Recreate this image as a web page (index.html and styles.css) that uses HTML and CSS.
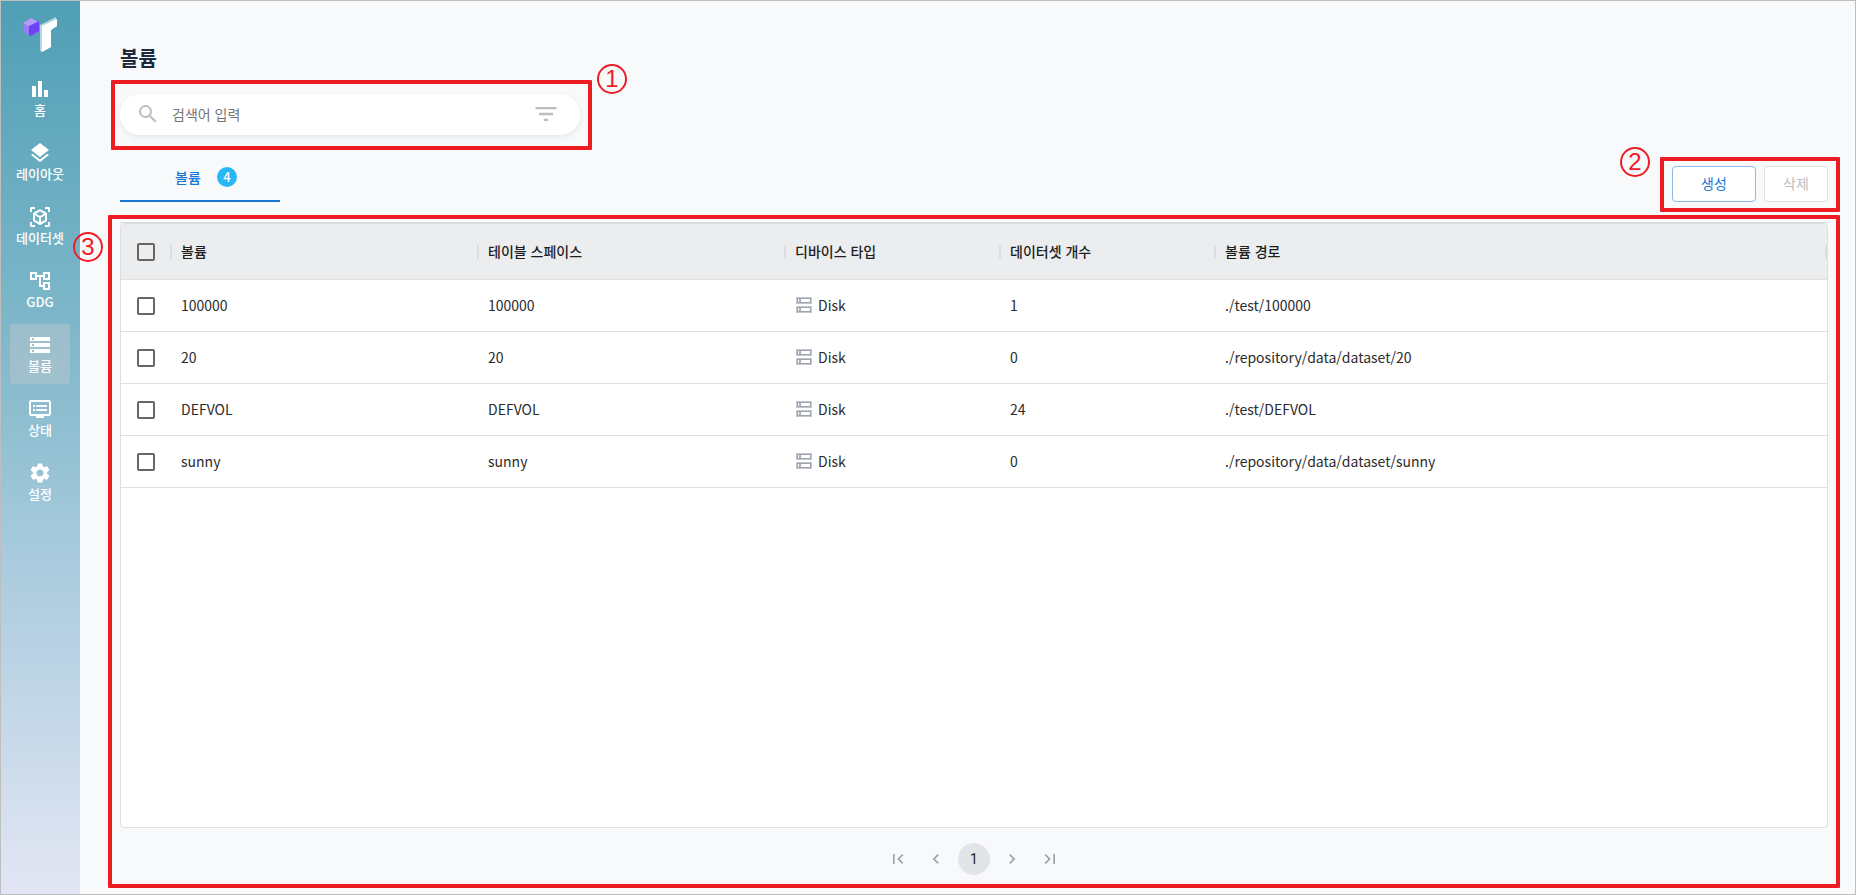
FILE: index.html
```html
<!DOCTYPE html>
<html lang="ko">
<head>
<meta charset="utf-8">
<title>볼륨</title>
<link rel="stylesheet" href="styles.css">
</head>
<body>
<svg class="sprite" aria-hidden="true">
  <symbol id="disk" viewBox="0 0 16 16">
    <path d="M0 0h16v7H0zM0 9h16v7H0z" fill="#c3c7cf"/>
    <path d="M1 1h14v5H1zM1 10h14v5H1z" fill="#9da3ae"/>
    <path d="M2 2h12v3H2zM2 11h12v3H2z" fill="#fff"/>
    <path d="M3 2h2v3H3zM3 11h2v3H3z" fill="#a9aeb8"/>
  </symbol>
</svg>
<div class="app">
  <nav class="sidebar">
    <a class="logo" href="#" aria-label="홈으로">
      <svg width="36" height="36" viewBox="0 0 36 36">
        <path d="M1 6l8-5 8 5v9l-8 4-7-4z" fill="#9b7df8"/>
        <path d="M1 6l8-5 7 4-8 5z" fill="#b39bfa"/>
        <path d="M7 9l10-5v10l-8 5-2-1z" fill="#6f42f7"/>
        <path d="M18 8L34 0l1 9-6 4v17l-9 5-2-1z" fill="#b5d8e0"/>
        <path d="M20 9l15-7v7l-6 4v17l-9 5z" fill="#fff"/>
      </svg>
    </a>
    <a class="nav-item" href="#"><svg class="icon" viewBox="0 0 24 24"><path d="M4 9h4v11H4zm12 4h4v7h-4zm-6-9h4v16h-4z"/></svg><span>홈</span></a>
    <a class="nav-item" href="#"><svg class="icon" viewBox="0 0 24 24"><path d="M11.99 18.54l-7.37-5.73L3 14.07l9 7 9-7-1.63-1.27-7.38 5.74zM12 16l7.36-5.73L21 9l-9-7-9 7 1.63 1.27L12 16z"/></svg><span>레이아웃</span></a>
    <a class="nav-item" href="#"><svg class="icon" viewBox="0 0 24 24"><path d="M17,22V20H20V17H22V20.5C22,20.89 21.84,21.24 21.54,21.54C21.24,21.84 20.89,22 20.5,22H17M7,22H3.5C3.11,22 2.76,21.84 2.46,21.54C2.16,21.24 2,20.89 2,20.5V17H4V20H7V22M17,2H20.5C20.89,2 21.24,2.16 21.54,2.46C21.84,2.76 22,3.11 22,3.5V7H20V4H17V2M7,2V4H4V7H2V3.5C2,3.11 2.16,2.76 2.46,2.46C2.76,2.16 3.11,2 3.5,2H7M13,17.25L17,14.95V10.36L13,12.66V17.25M12,10.92L16,8.63L12,6.28L8,8.63L12,10.92M7,14.95L11,17.25V12.66L7,10.36V14.95M18.23,7.59C18.73,7.91 19,8.34 19,8.91V15.23C19,15.8 18.73,16.23 18.23,16.55L12.75,19.73C12.25,20.05 11.75,20.05 11.25,19.73L5.77,16.55C5.27,16.23 5,15.8 5,15.23V8.91C5,8.34 5.27,7.91 5.77,7.59L11.25,4.41C11.5,4.28 11.75,4.22 12,4.22C12.25,4.22 12.5,4.28 12.75,4.41L18.23,7.59Z"/></svg><span>데이터셋</span></a>
    <a class="nav-item" href="#"><svg class="icon" viewBox="0 0 24 24"><path d="M22 11V3h-7v3H9V3H2v8h7V8h2v10h4v3h7v-8h-7v3h-2V8h2v3h7zM7 9H4V5h3v4zm10 6h3v4h-3v-4zm0-10h3v4h-3V5z"/></svg><span>GDG</span></a>
    <a class="nav-item active" href="#" aria-current="page"><svg class="icon" viewBox="0 0 24 24"><path d="M2 20h20v-4H2v4zm2-3h2v2H4v-2zM2 4v4h20V4H2zm4 3H4V5h2v2zm-4 7h20v-4H2v4zm2-3h2v2H4v-2z"/></svg><span>볼륨</span></a>
    <a class="nav-item" href="#"><svg class="icon" viewBox="0 0 24 24"><path d="M21 3H3c-1.1 0-2 .9-2 2v12c0 1.1.9 2 2 2h5v2h8v-2h5c1.1 0 1.99-.9 1.99-2L23 5c0-1.1-.9-2-2-2zm0 14H3V5h18v12zm-2-9H8v2h11V8zm0 4H8v2h11v-2zM7 8H5v2h2V8zm0 4H5v2h2v-2z"/></svg><span>상태</span></a>
    <a class="nav-item" href="#"><svg class="icon" viewBox="0 0 24 24"><path d="M19.14 12.94c.04-.3.06-.61.06-.94 0-.32-.02-.64-.07-.94l2.03-1.58c.18-.14.23-.41.12-.61l-1.92-3.32c-.12-.22-.37-.29-.59-.22l-2.39.96c-.5-.38-1.03-.7-1.62-.94l-.36-2.54c-.04-.24-.24-.41-.48-.41h-3.84c-.24 0-.43.17-.47.41l-.36 2.54c-.59.24-1.13.57-1.62.94l-2.39-.96c-.22-.08-.47 0-.59.22L2.74 8.87c-.12.21-.08.47.12.61l2.03 1.58c-.05.3-.09.63-.09.94s.02.64.07.94l-2.03 1.58c-.18.14-.23.41-.12.61l1.92 3.32c.12.22.37.29.59.22l2.39-.96c.5.38 1.03.7 1.62.94l.36 2.54c.05.24.24.41.48.41h3.84c.24 0 .44-.17.47-.41l.36-2.54c.59-.24 1.13-.56 1.62-.94l2.39.96c.22.08.47 0 .59-.22l1.92-3.32c.12-.22.07-.47-.12-.61l-2.01-1.58zM12 15.6c-1.98 0-3.6-1.62-3.6-3.6s1.62-3.6 3.6-3.6 3.6 1.62 3.6 3.6-1.62 3.6-3.6 3.6z"/></svg><span>설정</span></a>
  </nav>
  <main class="content">
    <h1 class="title">볼륨</h1>
    <div class="search">
      <svg class="icon" viewBox="0 0 24 24"><path d="M15.5 14h-.79l-.28-.27A6.471 6.471 0 0 0 16 9.5 6.5 6.5 0 1 0 9.5 16c1.61 0 3.09-.59 4.23-1.57l.27.28v.79l5 4.99L20.49 19l-4.99-5zm-6 0C7.01 14 5 11.99 5 9.5S7.01 5 9.5 5 14 7.01 14 9.5 11.99 14 9.5 14z"/></svg>
      <input class="search-input" type="text" placeholder="검색어 입력" aria-label="검색어 입력">
      <button class="filter" type="button" aria-label="필터"><svg class="icon-large" viewBox="0 0 24 24"><path d="M10 18h4v-2h-4v2zM3 6v2h18V6H3zm3 7h12v-2H6v2z"/></svg></button>
      <div class="callout callout-search"><span class="callout-number">1</span></div>
    </div>
    <div class="toolbar">
      <button class="tab" type="button" aria-current="true">볼륨<span class="badge">4</span></button>
      <div class="actions">
        <button class="btn btn-primary" type="button">생성</button>
        <button class="btn" type="button" disabled>삭제</button>
        <div class="callout callout-actions"><span class="callout-number">2</span></div>
      </div>
    </div>
    <section class="panel">
      <div class="card">
        <table class="grid">
          <colgroup><col class="col-check"><col class="col-wide"><col class="col-wide"><col class="col-mid"><col class="col-mid"><col></colgroup>
          <thead>
            <tr><th><input class="check" type="checkbox" aria-label="전체 선택"></th><th>볼륨</th><th>테이블 스페이스</th><th>디바이스 타입</th><th>데이터셋 개수</th><th>볼륨 경로</th></tr>
          </thead>
          <tbody>
            <tr><td><input class="check" type="checkbox" aria-label="100000 선택"></td><td>100000</td><td>100000</td><td><span class="device"><svg class="disk"><use href="#disk"/></svg>Disk</span></td><td>1</td><td>./test/100000</td></tr>
            <tr><td><input class="check" type="checkbox" aria-label="20 선택"></td><td>20</td><td>20</td><td><span class="device"><svg class="disk"><use href="#disk"/></svg>Disk</span></td><td>0</td><td>./repository/data/dataset/20</td></tr>
            <tr><td><input class="check" type="checkbox" aria-label="DEFVOL 선택"></td><td>DEFVOL</td><td>DEFVOL</td><td><span class="device"><svg class="disk"><use href="#disk"/></svg>Disk</span></td><td>24</td><td>./test/DEFVOL</td></tr>
            <tr><td><input class="check" type="checkbox" aria-label="sunny 선택"></td><td>sunny</td><td>sunny</td><td><span class="device"><svg class="disk"><use href="#disk"/></svg>Disk</span></td><td>0</td><td>./repository/data/dataset/sunny</td></tr>
          </tbody>
        </table>
      </div>
      <div class="pager">
        <button class="page" type="button" aria-label="첫 페이지"><svg class="icon-small" viewBox="0 0 24 24"><path d="M18.41 16.59L13.82 12l4.59-4.59L17 6l-6 6 6 6zM6 6h2v12H6V6z"/></svg></button>
        <button class="page" type="button" aria-label="이전 페이지"><svg class="icon-small" viewBox="0 0 24 24"><path d="M15.41 7.41L14 6l-6 6 6 6 1.41-1.41L10.83 12z"/></svg></button>
        <button class="page current" type="button" aria-current="page">1</button>
        <button class="page" type="button" aria-label="다음 페이지"><svg class="icon-small" viewBox="0 0 24 24"><path d="M10 6L8.59 7.41 13.17 12l-4.58 4.59L10 18l6-6z"/></svg></button>
        <button class="page" type="button" aria-label="마지막 페이지"><svg class="icon-small" viewBox="0 0 24 24"><path d="M5.59 7.41L10.18 12l-4.59 4.59L7 18l6-6-6-6zM16 6h2v12h-2V6z"/></svg></button>
      </div>
      <div class="callout callout-panel"><span class="callout-number">3</span></div>
    </section>
  </main>
</div>
</body>
</html>
```
FILE: styles.css
```css
* { box-sizing: border-box; }

body {
  margin: 0;
  font-family: "Noto Sans CJK KR", "Noto Sans", sans-serif;
  font-size: 14px;
  line-height: 20px;
  color: #2b2b2b;
}

button, input { font: inherit; color: inherit; }
button { padding: 0; border: 0; background: none; }

.sprite { position: absolute; width: 0; height: 0; }

.app {
  display: flex;
  min-height: 100vh;
  border: 1px solid #bebebe;
  background: #f8f9fb;
}

/* Sidebar */
.sidebar {
  flex: none;
  display: flex;
  flex-direction: column;
  align-items: center;
  gap: 4px;
  width: 79px;
  padding: 16px 10px 0 9px;
  background: linear-gradient(#4f9fb5, #8bbdcf 45%, #a5c9dc 60%, #e3e6f4);
}
.logo { height: 47px; }
.nav-item {
  display: flex;
  flex-direction: column;
  align-items: center;
  width: 60px;
  height: 60px;
  padding-top: 9px;
  border-radius: 4px;
  color: #fff;
  font-size: 13px;
  line-height: 18px;
  font-weight: 500;
  text-decoration: none;
  white-space: nowrap;
}
.nav-item.active { background: rgba(190, 200, 205, 0.45); }

.icon { flex: none; width: 24px; height: 24px; fill: currentColor; }
.icon-large { display: block; width: 28px; height: 28px; fill: currentColor; }
.icon-small { display: block; width: 20px; height: 20px; fill: currentColor; }

/* Content */
.content {
  flex: 1;
  display: flex;
  flex-direction: column;
  min-width: 0;
  padding: 43px 27px 19px 40px;
}
.title {
  margin: 0 0 22px;
  font-size: 20px;
  line-height: 28px;
  font-weight: 700;
  color: #1e293b;
}

.search {
  position: relative;
  display: flex;
  align-items: center;
  width: 460px;
  height: 41px;
  padding: 0 20px 1px 16px;
  border-radius: 20px;
  background: #fff;
  box-shadow: 0 2px 6px rgba(0, 0, 0, 0.08);
  color: #bdbdbd;
}
.search-input {
  flex: 1;
  min-width: 0;
  padding: 0 12px 1px;
  border: 0;
  outline: 0;
  background: none;
  color: #2b2b2b;
}
.search-input::placeholder { color: #757575; opacity: 1; }

.toolbar {
  display: flex;
  justify-content: space-between;
  align-items: flex-end;
  margin: 19px 0 20px;
}
.tab {
  display: flex;
  align-items: center;
  justify-content: center;
  gap: 16px;
  width: 160px;
  height: 48px;
  padding-left: 12px;
  border-bottom: 2px solid #1976d2;
  color: #1976d2;
  font-weight: 500;
}
.badge {
  width: 20px;
  height: 20px;
  border-radius: 50%;
  background: #29b6f6;
  color: #fff;
  font-size: 13px;
  text-align: center;
}
.actions { position: relative; display: flex; gap: 8px; }
.btn {
  min-width: 64px;
  height: 36px;
  padding: 0 16px 3px;
  border: 1px solid #e0e0e0;
  border-radius: 4px;
  background: #fff;
  color: #bdbdbd;
}
.btn-primary { min-width: 84px; border-color: #8bbae8; color: #1976d2; }

/* Table */
.panel {
  position: relative;
  flex: 1;
  display: flex;
  flex-direction: column;
  border-top: 1px solid #dcdde0;
}
.card {
  flex: 1;
  overflow: hidden;
  border: 1px solid #dedfe1;
  border-radius: 4px;
  background: #fff;
}
.grid {
  width: 100%;
  table-layout: fixed;
  border-collapse: separate;
  border-spacing: 0;
}
.col-check { width: 51px; }
.col-wide { width: 307px; }
.col-mid { width: 215px; }
.grid th, .grid td {
  height: 52px;
  padding: 0 9px 2px;
  border-bottom: 1px solid #e0e0e0;
  text-align: left;
  white-space: nowrap;
}
.grid th {
  position: relative;
  height: 56px;
  background: #ecedef;
  color: #1e1e1e;
  font-weight: 500;
}
.grid th::after {
  content: "";
  position: absolute;
  top: 21px;
  right: 0;
  width: 2px;
  height: 14px;
  background: #dcdee0;
}
.grid th:first-child, .grid td:first-child { padding: 0 16px; }
.check {
  appearance: none;
  display: block;
  width: 18px;
  height: 18px;
  margin: 0;
  border: 2px solid #666;
  border-radius: 2px;
}
.device { display: flex; align-items: center; gap: 6px; padding-left: 1px; }
.disk { width: 16px; height: 16px; }

.pager {
  display: flex;
  justify-content: center;
  gap: 6px;
  padding-top: 15px;
}
.page {
  display: grid;
  place-items: center;
  width: 32px;
  height: 32px;
  border-radius: 50%;
  color: #a0a2a5;
}
.page.current {
  background: #e3e4e6;
  color: #1e1e1e;
  font-family: Roboto, sans-serif;
}

/* Numbered callouts laid over the regions they describe */
.callout {
  position: absolute;
  border: 4px solid #ed1c24;
  border-radius: 1px;
  pointer-events: none;
}
.callout-search { inset: -14px -12px -15px -9px; }
.callout-actions { inset: -9px -12px -10px -12px; }
.callout-panel { inset: -8px -12px -13px -12px; }
.callout-number {
  position: absolute;
  width: 30px;
  height: 30px;
  border: 2px solid #ed1c24;
  border-radius: 50%;
  color: #ed1c24;
  font-family: "Liberation Sans Narrow", "Liberation Sans", sans-serif;
  font-size: 24px;
  line-height: 26px;
  text-align: center;
}
.callout-search .callout-number { top: -20px; right: -39px; }
.callout-actions .callout-number { top: -14px; left: -44px; }
.callout-panel .callout-number { top: 13px; left: -39px; }
```
